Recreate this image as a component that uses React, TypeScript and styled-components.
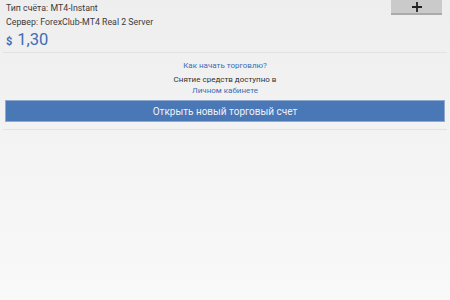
import * as React from "react";
import styled, { createGlobalStyle } from "styled-components";

const GlobalStyle = createGlobalStyle`
  html, body {
    margin: 0;
    padding: 0;
    height: 100%;
  }
  body {
    font-family: Roboto, "Liberation Sans", sans-serif;
    background: linear-gradient(180deg, #eeeeee 0%, #f9f9f9 100%);
    overflow: hidden;
  }
`;

const Screen = styled.div`
  width: 450px;
  height: 300px;
  display: flex;
  flex-direction: column;
`;

const AccountCard = styled.div`
  position: relative;
  margin: 0 3px;
  padding: 1px 3px 0;
  height: 51px;
  border-bottom: 1px solid #e2e2e2;
`;

const InfoLine = styled.div`
  font-size: 8.8px;
  line-height: 14px;
  color: #3c3c3c;
  white-space: nowrap;
`;

const Balance = styled.div`
  display: flex;
  align-items: baseline;
  gap: 5px;
  color: #3b6db5;
  margin-top: 1px;
`;

const Currency = styled.span`
  font-size: 11px;
  font-weight: 700;
`;

const Amount = styled.span`
  font-size: 16.5px;
  line-height: 20px;
`;

const AddButton = styled.button`
  position: absolute;
  top: -10px;
  right: 5px;
  width: 51px;
  height: 25px;
  border: none;
  border-bottom: 2px solid #aaaaaa;
  background: #cacaca;
  padding: 0 0 1px;
  display: flex;
  align-items: flex-end;
  justify-content: center;
`;

const Actions = styled.div`
  display: flex;
  flex-direction: column;
  align-items: center;
  padding-top: 7px;
  margin: 0 3px;
  padding-bottom: 7px;
  border-bottom: 1px solid #e2e2e2;
`;

const Link = styled.a`
  font-size: 8px;
  line-height: 11px;
  color: #3b6db5;
  text-decoration: none;
`;

const Note = styled.div`
  font-size: 8px;
  line-height: 11px;
  color: #333333;
  margin-top: 2.5px;
`;

const OpenButton = styled.button`
  align-self: stretch;
  margin: 4.5px 2px 0;
  height: 22px;
  border: 1px solid #8fa9cf;
  background: #4a77b6;
  color: #eef2f8;
  font-family: Roboto, "Liberation Sans", sans-serif;
  font-size: 10px;
  padding: 0;
`;

export default function App() {
  return (
    <Screen>
      <GlobalStyle />
      <AccountCard>
        <InfoLine>Тип счёта: MT4-Instant</InfoLine>
        <InfoLine>Сервер: ForexClub-MT4 Real 2 Server</InfoLine>
        <Balance>
          <Currency>$</Currency>
          <Amount>1,30</Amount>
        </Balance>
        <AddButton aria-label="add">
          <svg width="10" height="10" viewBox="0 0 10 10">
            <path d="M5 0v10M0 5h10" stroke="#222" strokeWidth="1.8" />
          </svg>
        </AddButton>
      </AccountCard>
      <Actions>
        <Link href="#">Как начать торговлю?</Link>
        <Note>Снятие средств доступно в</Note>
        <Link href="#">Личном кабинете</Link>
        <OpenButton>Открыть новый торговый счет</OpenButton>
      </Actions>
    </Screen>
  );
}
